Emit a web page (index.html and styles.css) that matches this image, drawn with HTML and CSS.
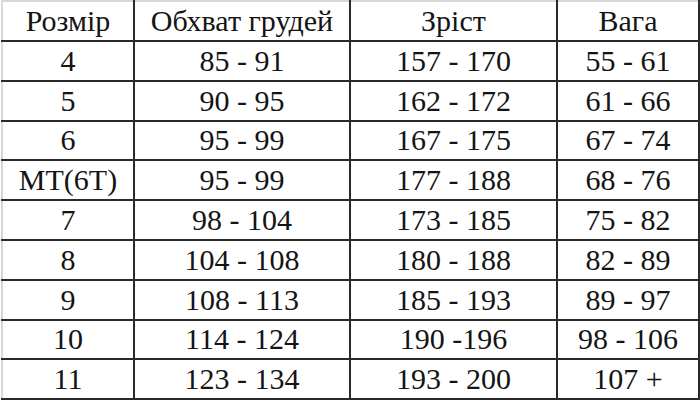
FILE: index.html
```html
<!DOCTYPE html>
<html lang="uk">
<head>
<meta charset="utf-8">
<link rel="stylesheet" href="styles.css">
</head>
<body>
<table class="sizes">
  <colgroup>
    <col class="c1"><col class="c2"><col class="c3"><col class="c4">
  </colgroup>
  <thead>
    <tr><th>Розмір</th><th>Обхват грудей</th><th>Зріст</th><th>Вага</th></tr>
  </thead>
  <tbody>
    <tr><td>4</td><td>85 - 91</td><td>157 - 170</td><td>55 - 61</td></tr>
    <tr><td>5</td><td>90 - 95</td><td>162 - 172</td><td>61 - 66</td></tr>
    <tr><td>6</td><td>95 - 99</td><td>167 - 175</td><td>67 - 74</td></tr>
    <tr><td>MT(6T)</td><td>95 - 99</td><td>177 - 188</td><td>68 - 76</td></tr>
    <tr><td>7</td><td>98 - 104</td><td>173 - 185</td><td>75 - 82</td></tr>
    <tr><td>8</td><td>104 - 108</td><td>180 - 188</td><td>82 - 89</td></tr>
    <tr><td>9</td><td>108 - 113</td><td>185 - 193</td><td>89 - 97</td></tr>
    <tr><td>10</td><td>114 - 124</td><td>190 -196</td><td>98 - 106</td></tr>
    <tr><td>11</td><td>123 - 134</td><td>193 - 200</td><td>107 +</td></tr>
  </tbody>
</table>
</body>
</html>
```
FILE: styles.css
```css
html, body {
  margin: 0;
  padding: 0;
  background: #fff;
}
.sizes {
  border-collapse: collapse;
  table-layout: fixed;
  width: 698px;
  margin-left: 1px;
  font-family: "Liberation Serif", Tinos, "Times New Roman", "DejaVu Serif", serif;
  font-size: 30px;
  color: #141414;
}
.sizes th, .sizes td {
  font-family: inherit;
  font-weight: normal;
  text-align: center;
  vertical-align: middle;
  padding: 0;
  height: 37.8px;
  line-height: 32px;
  border: 2px solid #2a2a2a;
  white-space: nowrap;
}
.c1 { width: 132px; }
.c2 { width: 216px; }
.c3 { width: 207px; }
.c4 { width: 142px; }
.sizes th {
  height: 38px;
  border-top-color: #d8d8d8;
}
.sizes tr > :first-child {
  border-left-color: #d8d8d8;
}
```
